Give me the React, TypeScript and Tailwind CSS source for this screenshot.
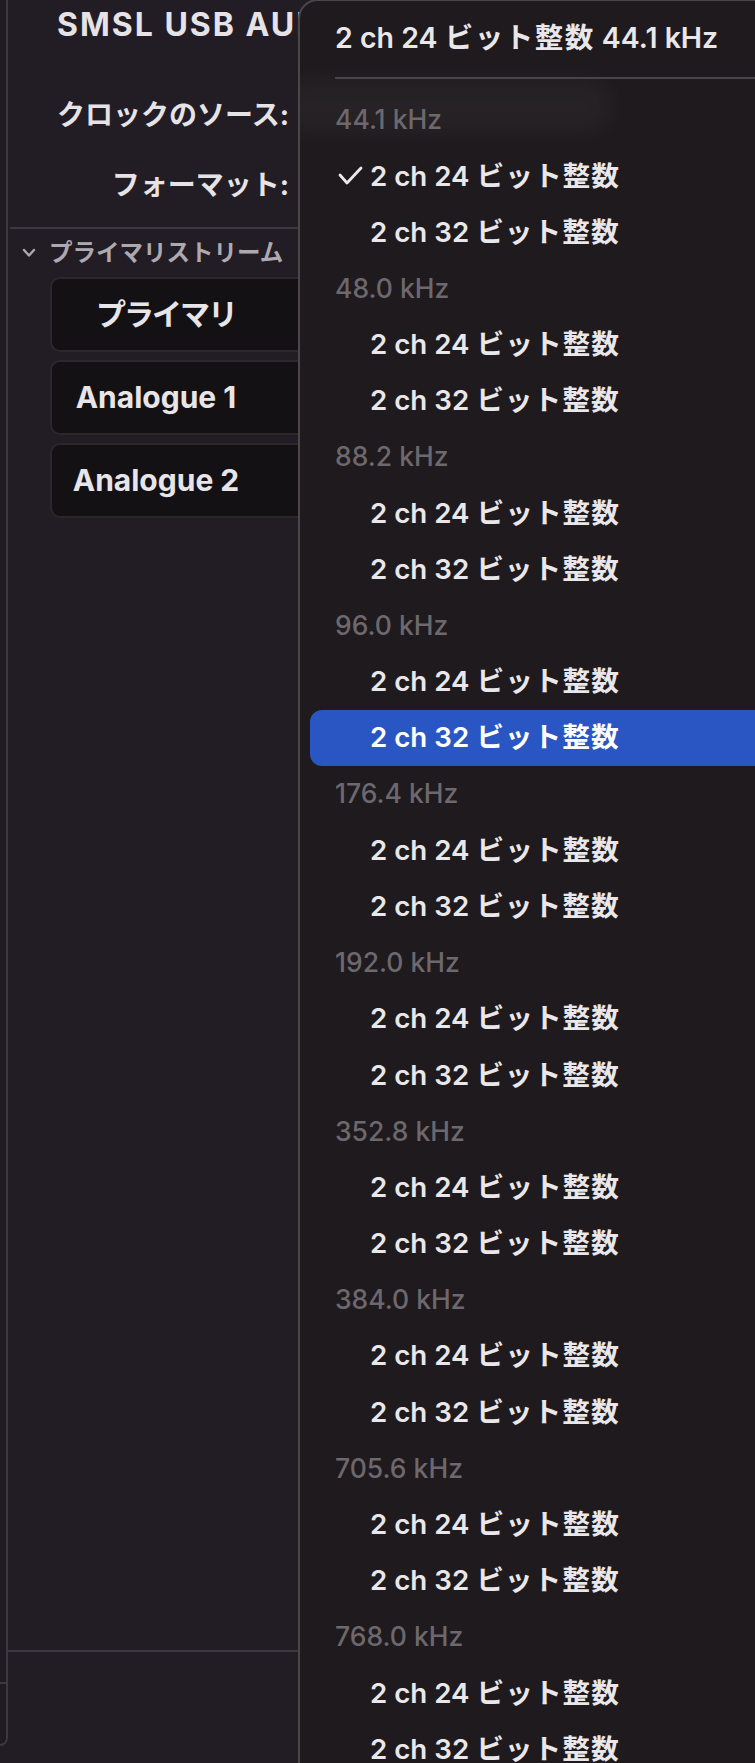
import React from "react";

const groups = ["44.1", "48.0", "88.2", "96.0", "176.4", "192.0", "352.8", "384.0", "705.6", "768.0"];

type Row =
  | { kind: "head"; label: string }
  | { kind: "item"; bits: string; checked?: boolean; selected?: boolean };

const rows: Row[] = [];
groups.forEach((g, gi) => {
  rows.push({ kind: "head", label: `${g} kHz` });
  rows.push({ kind: "item", bits: "24", checked: gi === 0 });
  rows.push({ kind: "item", bits: "32", selected: gi === 3 });
});

function Check() {
  return (
    <svg width="26" height="20" viewBox="0 0 26 20" className="shrink-0">
      <polyline points="2,9 9,17 23,2" fill="none" stroke="#ebe9eb" strokeWidth="2.8" strokeLinecap="round" strokeLinejoin="round" />
    </svg>
  );
}

function Chevron() {
  return (
    <svg width="14" height="10" viewBox="0 0 14 10">
      <polyline points="2,2 7,7.5 12,2" fill="none" stroke="#aea9b0" strokeWidth="2.4" strokeLinecap="round" strokeLinejoin="round" />
    </svg>
  );
}

function Label({ bits }: { bits: string }) {
  return (
    <span>
      2 ch {bits} <span className="tracking-[1px]">ビット整数</span>
    </span>
  );
}

export default function App() {
  return (
    <div className="relative h-[1763px] w-[755px] overflow-hidden bg-[#221c24] font-['Inter','Noto_Sans_CJK_JP',sans-serif] text-[#e9e6ea]">
      <div className="flex h-full">
        {/* window edge on the far left */}
        <div className="-mt-[24px] flex h-[1770px] w-[8px] shrink-0 flex-col rounded-r-[26px] border-y-2 border-r-2 border-[#3c3741] bg-[#201b22]">
          <div className="h-[1706px] shrink-0 border-b-2 border-[#3c3741]" />
        </div>

        {/* main pane */}
        <div className="flex min-w-0 flex-1 flex-col bg-gradient-to-r from-[#221c25] via-[#221c24] to-[#251c24]">
          <div className="flex h-[50px] items-center whitespace-nowrap pl-[49px] text-[32px] font-bold tracking-[2px] text-[#e6e3e7]">
            SMSL USB AUDIO
          </div>

          <div className="mt-[30px] flex flex-col">
            <div className="flex h-[70px] w-[281px] items-center justify-end whitespace-nowrap text-[28px] font-bold text-[#e6e3e7]">
              クロックのソース:
            </div>
            <div className="flex h-[70px] w-[281px] items-center justify-end whitespace-nowrap text-[28px] font-bold text-[#e6e3e7]">
              フォーマット:
            </div>
          </div>

          <div className="ml-[2px] mt-[7px] h-[2px] bg-[#3d3843]" />

          <div className="flex h-[48px] items-center gap-[13px] pl-[14px] whitespace-nowrap text-[23.5px] font-bold text-[#aea9b0]">
            <Chevron />
            <span>プライマリストリーム</span>
          </div>

          <div className="ml-[42px] flex w-[620px] flex-col gap-[8px]">
            {["プライマリ", "Analogue 1", "Analogue 2"].map((t, i) => (
              <div key={t} className="flex h-[75px] items-center rounded-[10px] border-2 border-[#2b272d] bg-[#131113]">
                <div className={`w-[208px] text-center text-[30px] font-bold text-[#e8e5e9] ${i === 0 ? "pl-[20px] tracking-[-2px]" : ""}`}>{t}</div>
              </div>
            ))}
          </div>

          <div className="mt-auto h-[113px] shrink-0 border-t-2 border-[#3d3843]" />
        </div>
      </div>

      {/* popup menu overlay */}
      <div className="absolute left-[298px] top-[-1px] bottom-[-30px] w-[500px] overflow-hidden rounded-tl-[20px] border-l-2 border-t-2 border-[#4a464a] bg-[#1e1a1d]">
        <div className="pointer-events-none absolute left-[-20px] top-[80px] h-[50px] w-[330px] rounded-[20px] bg-white/[0.04] blur-md" />
        <div className="relative flex flex-col">
          <div className="mt-[9px] flex h-[56px] items-center whitespace-nowrap pl-[35px] text-[28.5px] font-semibold text-[#e9e7ea]">
            <span>
              2 ch 24 <span className="tracking-[1.5px]">ビット整数</span> 44.1 kHz
            </span>
          </div>
          <div className="ml-[35px] mt-[11px] h-[2px] bg-[#48444a]" />
          <div className="mt-[13px] flex flex-col">
            {rows.map((r, i) =>
              r.kind === "head" ? (
                <div key={i} className="flex h-[56.2px] items-center whitespace-nowrap pl-[35px] text-[26.5px] font-medium text-[#6d686d]">
                  {r.label}
                </div>
              ) : r.selected ? (
                <div key={i} className="ml-[10px] flex h-[56.2px] items-center whitespace-nowrap rounded-[12px] bg-[#2a56c4] pl-[28px] text-[27.7px] font-semibold text-white">
                  <span className="w-[32px] shrink-0" />
                  <Label bits={r.bits} />
                </div>
              ) : (
                <div key={i} className="flex h-[56.2px] items-center whitespace-nowrap pl-[38px] text-[27.7px] font-semibold text-[#e9e7ea]">
                  <span className="flex w-[32px] shrink-0 items-center">{r.checked ? <Check /> : null}</span>
                  <Label bits={r.bits} />
                </div>
              )
            )}
          </div>
        </div>
      </div>
    </div>
  );
}
